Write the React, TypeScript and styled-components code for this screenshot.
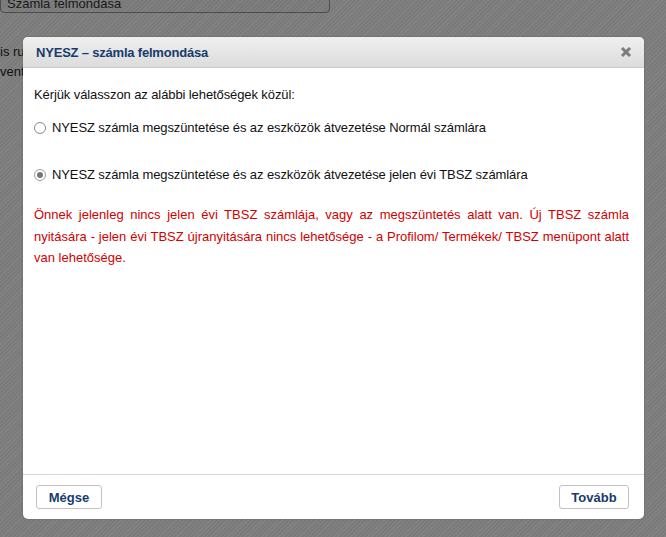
import React from "react";
import styled, { createGlobalStyle } from "styled-components";

const Global = createGlobalStyle`
  html, body { margin: 0; padding: 0; }
  body {
    font-family: "Liberation Sans", Arial, sans-serif;
    font-size: 13px;
    background: #fff;
    width: 666px;
    height: 537px;
    overflow: hidden;
  }
`;

const Page = styled.div`
  position: relative;
  width: 666px;
  height: 537px;
  overflow: hidden;
  background: #ffffff;
`;

const BgCard = styled.div`
  width: 330px;
  height: 26px;
  margin-top: -13px;
  box-sizing: border-box;
  border: 1px solid #999;
  border-radius: 0 0 4px 4px;
  background: #fafafa;
  padding: 0 6px 1px;
  display: flex;
  align-items: flex-end;
  font-size: 13px;
  color: #333;
  line-height: 14px;
`;

const BgText = styled.div`
  margin-top: 29px;
  font-size: 13px;
  line-height: 20px;
  color: #222;
`;

const Overlay = styled.div`
  position: absolute;
  inset: 0;
  background-color: rgba(0, 0, 0, 0.5);
  background-image: repeating-linear-gradient(
    135deg,
    rgba(255, 255, 255, 0.03) 0px,
    rgba(255, 255, 255, 0.03) 1px,
    rgba(0, 0, 0, 0.03) 1px,
    rgba(0, 0, 0, 0.03) 3px
  );
`;

const Dialog = styled.div`
  position: absolute;
  left: 23px;
  top: 37px;
  width: 621px;
  height: 482px;
  box-sizing: border-box;
  background: #fff;
  border-radius: 5px;
  overflow: hidden;
  display: flex;
  flex-direction: column;
  box-shadow: 0 0 2px rgba(0, 0, 0, 0.25);
`;

const Header = styled.div`
  height: 31px;
  flex: none;
  box-sizing: border-box;
  background: linear-gradient(#efefef, #dcdcdc);
  border-bottom: 1px solid #c9c9c9;
  display: flex;
  align-items: center;
  justify-content: space-between;
  padding: 0 12px 0 13px;
`;

const Title = styled.div`
  font-weight: bold;
  font-size: 13px;
  color: #173c6c;
  letter-spacing: -0.2px;
`;

const Close = styled.div`
  width: 12px;
  height: 12px;
  display: flex;
  align-items: center;
  justify-content: center;
`;

const Body = styled.div`
  flex: 1;
  padding: 19px 15px 0 11px;
  color: #111;
`;

const Intro = styled.div`
  font-size: 13px;
  line-height: 15px;
  margin-bottom: 18px;
  letter-spacing: -0.1px;
`;

const Option = styled.label<{ $gap: number }>`
  display: flex;
  align-items: center;
  gap: 6px;
  font-size: 13px;
  line-height: 15px;
  letter-spacing: -0.1px;
  margin-bottom: ${(p) => p.$gap}px;
`;

const Radio = styled.span<{ $checked?: boolean }>`
  width: 12px;
  height: 12px;
  box-sizing: border-box;
  border-radius: 50%;
  border: 1px solid ${(p) => (p.$checked ? "#9a9a9a" : "#8a8a8a")};
  background: #fff;
  display: flex;
  align-items: center;
  justify-content: center;
  flex: none;
  &::after {
    content: "";
    display: ${(p) => (p.$checked ? "block" : "none")};
    width: 6px;
    height: 6px;
    border-radius: 50%;
    background: #767676;
  }
`;

const Warning = styled.p`
  margin: 0;
  color: #d20000;
  font-size: 13px;
  line-height: 21.5px;
  text-align: justify;
`;

const Footer = styled.div`
  flex: none;
  height: 45px;
  box-sizing: border-box;
  border-top: 1px solid #d6d6d6;
  display: flex;
  align-items: flex-start;
  justify-content: space-between;
  padding: 10px 15px 0 13px;
`;

const Button = styled.button<{ $w: number }>`
  width: ${(p) => p.$w}px;
  height: 24px;
  box-sizing: border-box;
  border: 1px solid #c2c2c2;
  border-radius: 3px;
  background: #fff;
  font-family: "Liberation Sans", Arial, sans-serif;
  font-size: 13px;
  font-weight: bold;
  color: #173c6c;
  padding: 0;
  cursor: pointer;
`;

export default function App() {
  return (
    <Page>
      <Global />
      <BgCard>Számla felmondása</BgCard>
      <BgText>
        is rul
        <br />
        vent
      </BgText>
      <Overlay />
      <Dialog>
        <Header>
          <Title>NYESZ – számla felmondása</Title>
          <Close>
            <svg width="12" height="12" viewBox="0 0 12 12">
              <path
                d="M2 2 L10 10 M10 2 L2 10"
                stroke="#7c7c7c"
                strokeWidth="3"
                strokeLinecap="butt"
              />
            </svg>
          </Close>
        </Header>
        <Body>
          <Intro>Kérjük válasszon az alábbi lehetőségek közül:</Intro>
          <Option $gap={32}>
            <Radio />
            NYESZ számla megszüntetése és az eszközök átvezetése Normál számlára
          </Option>
          <Option $gap={22}>
            <Radio $checked />
            NYESZ számla megszüntetése és az eszközök átvezetése jelen évi TBSZ számlára
          </Option>
          <Warning>
            Önnek jelenleg nincs jelen évi TBSZ számlája, vagy az megszüntetés alatt van. Új TBSZ
            számla nyitására - jelen évi TBSZ újranyitására nincs lehetősége - a Profilom/
            Termékek/ TBSZ menüpont alatt van lehetősége.
          </Warning>
        </Body>
        <Footer>
          <Button $w={66}>Mégse</Button>
          <Button $w={70}>Tovább</Button>
        </Footer>
      </Dialog>
    </Page>
  );
}
